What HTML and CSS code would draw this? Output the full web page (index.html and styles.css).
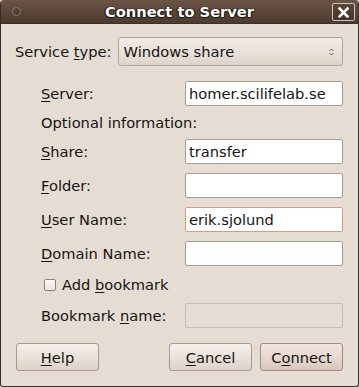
FILE: index.html
```html
<html>
<head>
  <title>Connect to Server</title>
  <link rel="stylesheet" href="styles.css">
</head>
<body>
<div class="window">
  <div class="titlebar">
    <span class="menu-dot"></span>
    <span class="title">Connect to Server</span>
    <span class="close">
      <svg width="11" height="11" viewBox="0 0 11 11">
        <path d="M1.5 1.5 L9.5 9.5 M9.5 1.5 L1.5 9.5" stroke="#ffffff" stroke-width="2.6" stroke-linecap="square" fill="none"/>
      </svg>
    </span>
  </div>

  <div class="content">
    <div class="service-row">
      <span class="label">Service <u>t</u>ype:</span>
      <div class="combo">
        <span>Windows share</span>
        <svg width="5" height="8" viewBox="0 0 5 8">
          <path d="M0.5 3 L2.5 1 L4.5 3 M0.5 5 L2.5 7 L4.5 5" stroke="#6e6258" stroke-width="1" fill="none"/>
        </svg>
      </div>
    </div>

    <div class="form">
      <span class="label"><u>S</u>erver:</span>
      <div class="entry">homer.scilifelab.se</div>

      <span class="label note">Optional information:</span>

      <span class="label"><u>S</u>hare:</span>
      <div class="entry">transfer</div>

      <span class="label"><u>F</u>older:</span>
      <div class="entry"></div>

      <span class="label"><u>U</u>ser Name:</span>
      <div class="entry focus">erik.sjolund</div>

      <span class="label"><u>D</u>omain Name:</span>
      <div class="entry"></div>

      <label class="check"><span class="box"></span><span>Add <u>b</u>ookmark</span></label>

      <span class="label">Bookmark <u>n</u>ame:</span>
      <div class="entry disabled"></div>
    </div>

    <div class="buttons">
      <button class="btn"><u>H</u>elp</button>
      <span class="spacer"></span>
      <button class="btn"><u>C</u>ancel</button>
      <button class="btn default">C<u>o</u>nnect</button>
    </div>
  </div>
</div>
</body>
</html>
```

FILE: styles.css
```css
body {
  margin: 0;
  background: #e5ddd4;
  font-family: "DejaVu Sans", sans-serif;
  font-size: 14.67px;
  color: #161412;
}

u {
  text-decoration: underline;
  text-underline-offset: 2px;
}

.window {
  width: 359px;
  height: 387px;
  box-sizing: border-box;
  border: 1px solid #3a2e27;
  border-top: none;
  border-radius: 4px 4px 3px 3px;
  background: #e5ddd4;
  overflow: hidden;
}

.titlebar {
  height: 24px;
  background: linear-gradient(#6a5446, #4d3a2f);
  border-bottom: 1px solid #3e3028;
  box-sizing: border-box;
  display: flex;
  align-items: center;
  position: relative;
}

.menu-dot {
  width: 9px;
  height: 9px;
  margin-left: 11px;
  border-radius: 50%;
  background: radial-gradient(circle at 40% 35%, #5e4a3e, #3a2c24);
  border: 1px solid #8a7a6e;
  box-sizing: border-box;
}

.title {
  position: absolute;
  left: 0;
  right: 0;
  text-align: center;
  font-weight: bold;
  color: #ffffff;
  text-shadow: 0 1px 1px #1c140f, 1px 0 1px #1c140f, -1px 0 1px #1c140f;
  line-height: 24px;
}

.close {
  margin-left: auto;
  margin-right: 3px;
  margin-top: 1px;
  width: 23px;
  height: 18px;
  box-sizing: border-box;
  border: 1px solid #cfc6be;
  border-radius: 2px;
  background: linear-gradient(#5a463a, #43332a);
  display: flex;
  align-items: center;
  justify-content: center;
  position: relative;
}

.content {
  padding: 13px 15px 0 14px;
}

.label {
  line-height: 15px;
  white-space: nowrap;
}

.service-row {
  display: flex;
  align-items: center;
  gap: 6px;
}

.combo {
  flex: 1;
  height: 29px;
  box-sizing: border-box;
  border: 1px solid #b2a598;
  border-radius: 3px;
  background: linear-gradient(#f1ece7, #e9e1d9 55%, #ddd3c9);
  display: flex;
  align-items: center;
  justify-content: space-between;
  padding: 0 8px 0 5px;
}

.form {
  margin: 15px 0 0 26px;
  display: grid;
  grid-template-columns: 1fr 158px;
  row-gap: 9px;
  align-items: center;
}

.note {
  grid-column: 1 / 3;
}

.entry {
  height: 25px;
  box-sizing: border-box;
  border: 1px solid #a99d92;
  border-radius: 2px;
  background: #ffffff;
  padding: 0 3px;
  display: flex;
  align-items: center;
  white-space: nowrap;
}

.entry.focus {
  border-color: #d69c84;
}

.entry.disabled {
  background: #e5ddd4;
  border-color: #c6bcb2;
}

.check {
  grid-column: 1 / 3;
  height: 19px;
  display: flex;
  align-items: center;
  gap: 6px;
  padding-left: 3px;
}

.box {
  width: 12px;
  height: 12px;
  box-sizing: border-box;
  border: 1px solid #8f8379;
  border-radius: 2px;
  background: linear-gradient(#fbfaf9, #ece6e0);
}

.buttons {
  margin-top: 15px;
  padding-left: 1px;
  display: flex;
  gap: 8px;
}

.spacer {
  flex: 1;
}

.btn {
  width: 83px;
  height: 28px;
  box-sizing: border-box;
  border: 1px solid #a89a8d;
  border-radius: 3px;
  background: linear-gradient(#f3efeb, #eae3dc 50%, #dcd2c8);
  font-family: "DejaVu Sans", sans-serif;
  font-size: 14.67px;
  color: #161412;
  padding: 0;
}

.btn.default {
  background: linear-gradient(#f1e6e0, #e7d9d1 50%, #d9c6bb);
  border-color: #a08d80;
}
```
